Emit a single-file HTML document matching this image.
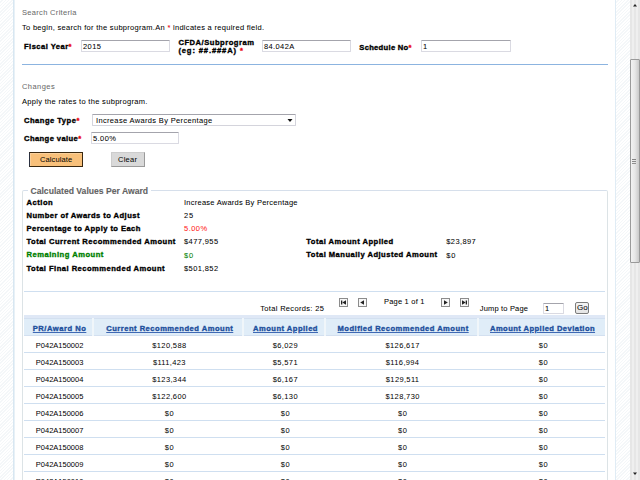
<!DOCTYPE html>
<html><head><meta charset="utf-8"><style>
html,body{margin:0;padding:0;width:640px;height:480px;overflow:hidden;background:#fff;position:relative}
.t{position:absolute;white-space:nowrap;font-family:"Liberation Sans", sans-serif;color:#000}
.r{position:absolute}
</style></head><body>
<div class="r" style="left:0px;top:0px;width:13px;height:480px;background:repeating-linear-gradient(135deg,#ffffff 0px,#ffffff 1.3px,#f4f7f9 1.3px,#f4f7f9 2.3px)"></div>
<div class="r" style="left:13px;top:0px;width:1px;height:480px;background:#d8e7f2"></div>
<div class="r" style="left:14px;top:0px;width:1px;height:480px;background:#e8f1f7"></div>
<div class="r" style="left:615px;top:0px;width:1px;height:480px;background:#e0ecf5"></div>
<div class="r" style="left:616px;top:0px;width:14px;height:480px;background:repeating-linear-gradient(135deg,#ffffff 0px,#ffffff 1.3px,#f4f7f9 1.3px,#f4f7f9 2.3px)"></div>
<div class="r" style="left:630px;top:0px;width:10px;height:480px;background:repeating-linear-gradient(90deg,#e6e6e6 0px,#e6e6e6 2px,#efefef 2px,#efefef 4px)"></div>
<svg class="r" style="left:630px;top:0px" width="10" height="12"><path d="M3 6.5 L5 4 L7 6.5 Z" fill="#222"/></svg>
<svg class="r" style="left:630px;top:468px" width="10" height="12"><path d="M3 4.5 L5 7 L7 4.5 Z" fill="#222"/></svg>
<div class="r" style="left:630px;top:59px;width:10px;height:204px;box-sizing:border-box;border:1px solid #9a9a9a;border-radius:1px;background:linear-gradient(90deg,#f2f2f2,#e6e6e6 50%,#c9c9c9)"></div>
<div class="r" style="left:632px;top:159px;width:4px;height:1px;background:#858585"></div>
<div class="r" style="left:632px;top:161px;width:4px;height:1px;background:#8a8a8a"></div>
<div class="r" style="left:632px;top:163px;width:4px;height:1px;background:#909090"></div>
<div class="t" style="left:22px;top:9.05px;font-size:7.5px;line-height:7.5px;font-weight:normal;color:#6b6b6b;letter-spacing:0.319px;-webkit-text-stroke:0.04px currentColor;">Search Criteria</div>
<div class="t" style="left:22px;top:24.05px;font-size:7.5px;line-height:7.5px;font-weight:normal;color:#000;letter-spacing:0.296px;-webkit-text-stroke:0.04px currentColor;">To begin, search for the subprogram.An <span style="color:#e8000b">*</span> indicates a required field.</div>
<div class="t" style="left:24px;top:42.97px;font-size:7.6px;line-height:7.6px;font-weight:bold;color:#000;letter-spacing:0.458px;-webkit-text-stroke:0.35px currentColor;">Fiscal Year<span style="color:#e8000b">*</span></div>
<div class="r" style="left:81px;top:40px;width:89px;height:12px;box-sizing:border-box;border:1px solid #dadae2;border-top-color:#a4a4ac;border-radius:1px;background:#fff"></div>
<div class="t" style="left:83px;top:43.05px;font-size:7.5px;line-height:7.5px;font-weight:normal;color:#000;letter-spacing:0.445px;-webkit-text-stroke:0.04px currentColor;">2015</div>
<div class="t" style="left:178.4px;top:38.97px;font-size:7.6px;line-height:7.6px;font-weight:bold;color:#000;letter-spacing:0.514px;-webkit-text-stroke:0.35px currentColor;">CFDA/Subprogram</div>
<div class="t" style="left:178.4px;top:46.97px;font-size:7.6px;line-height:7.6px;font-weight:bold;color:#000;letter-spacing:0.866px;-webkit-text-stroke:0.35px currentColor;">(eg: ##.###A) <span style="color:#e8000b">*</span></div>
<div class="r" style="left:262px;top:40px;width:89px;height:12px;box-sizing:border-box;border:1px solid #dadae2;border-top-color:#a4a4ac;border-radius:1px;background:#fff"></div>
<div class="t" style="left:264px;top:43.05px;font-size:7.5px;line-height:7.5px;font-weight:normal;color:#000;letter-spacing:0.373px;-webkit-text-stroke:0.04px currentColor;">84.042A</div>
<div class="t" style="left:359.3px;top:43.97px;font-size:7.6px;line-height:7.6px;font-weight:bold;color:#000;letter-spacing:0.293px;-webkit-text-stroke:0.35px currentColor;">Schedule No<span style="color:#e8000b">*</span></div>
<div class="r" style="left:421px;top:40px;width:90px;height:12px;box-sizing:border-box;border:1px solid #dadae2;border-top-color:#a4a4ac;border-radius:1px;background:#fff"></div>
<div class="t" style="left:423px;top:43.05px;font-size:7.5px;line-height:7.5px;font-weight:normal;color:#000;-webkit-text-stroke:0.04px currentColor;">1</div>
<div class="r" style="left:22px;top:64px;width:586px;height:1px;background:#8cb4e0"></div>
<div class="t" style="left:22px;top:83.45px;font-size:7.5px;line-height:7.5px;font-weight:normal;color:#6b6b6b;letter-spacing:0.447px;-webkit-text-stroke:0.04px currentColor;">Changes</div>
<div class="t" style="left:22px;top:98.45px;font-size:7.5px;line-height:7.5px;font-weight:normal;color:#000;letter-spacing:0.311px;-webkit-text-stroke:0.04px currentColor;">Apply the rates to the subprogram.</div>
<div class="t" style="left:24px;top:117.37px;font-size:7.6px;line-height:7.6px;font-weight:bold;color:#000;letter-spacing:0.480px;-webkit-text-stroke:0.35px currentColor;">Change Type<span style="color:#e8000b">*</span></div>
<div class="r" style="left:92px;top:114px;width:204px;height:12px;box-sizing:border-box;border:1px solid #d4d4dc;border-top-color:#a4a4ac;border-radius:1px;background:#fff"></div>
<div class="t" style="left:96px;top:117.05px;font-size:7.5px;line-height:7.5px;font-weight:normal;color:#000;letter-spacing:0.340px;-webkit-text-stroke:0.04px currentColor;">Increase Awards By Percentage</div>
<svg class="r" style="left:286px;top:117px" width="8" height="6"><path d="M1.5 2 L6.5 2 L4 5 Z" fill="#111"/></svg>
<div class="t" style="left:24px;top:135.22px;font-size:7.6px;line-height:7.6px;font-weight:bold;color:#000;letter-spacing:0.402px;-webkit-text-stroke:0.35px currentColor;">Change value<span style="color:#e8000b">*</span></div>
<div class="r" style="left:91px;top:132px;width:88px;height:12px;box-sizing:border-box;border:1px solid #dadae2;border-top-color:#a4a4ac;border-radius:1px;background:#fff"></div>
<div class="t" style="left:93px;top:135.05px;font-size:7.5px;line-height:7.5px;font-weight:normal;color:#000;letter-spacing:0.425px;-webkit-text-stroke:0.04px currentColor;">5.00%</div>
<div class="r" style="left:29px;top:152px;width:54px;height:15px;box-sizing:border-box;border:1px solid #3a2810;border-left-color:#2a3040;background:#f8c07a;box-shadow:inset 1px 1px 0 #fbd09a"></div>
<div class="t" style="left:40px;top:155.55px;font-size:7.5px;line-height:7.5px;font-weight:normal;color:#000;letter-spacing:0.104px;">Calculate</div>
<div class="r" style="left:111px;top:152px;width:34px;height:15px;box-sizing:border-box;border:1px solid #cccccc;border-right-color:#9a9a9a;border-bottom-color:#9a9a9a;background:#d9d9d9"></div>
<div class="t" style="left:118px;top:155.55px;font-size:7.5px;line-height:7.5px;font-weight:normal;color:#000;letter-spacing:0.239px;">Clear</div>
<div class="r" style="left:22px;top:190px;width:586px;height:310px;box-sizing:border-box;border:1px solid #dce3e6;border-top-color:#d6dfeb;border-radius:2px"></div>
<div class="r" style="left:28px;top:186px;width:123px;height:9px;background:#fff"></div>
<div class="t" style="left:30.5px;top:187.12px;font-size:8.6px;line-height:8.6px;font-weight:bold;color:#636363;-webkit-text-stroke:0.1px currentColor;">Calculated Values Per Award</div>
<div class="t" style="left:26.5px;top:198.97px;font-size:7.6px;line-height:7.6px;font-weight:bold;color:#000;letter-spacing:0.516px;-webkit-text-stroke:0.35px currentColor;">Action</div>
<div class="t" style="left:184px;top:199.05px;font-size:7.5px;line-height:7.5px;font-weight:normal;color:#000;letter-spacing:0.247px;-webkit-text-stroke:0.04px currentColor;">Increase Awards By Percentage</div>
<div class="t" style="left:26.5px;top:211.97px;font-size:7.6px;line-height:7.6px;font-weight:bold;color:#000;letter-spacing:0.445px;-webkit-text-stroke:0.35px currentColor;">Number of Awards to Adjust</div>
<div class="t" style="left:184px;top:212.05px;font-size:7.5px;line-height:7.5px;font-weight:normal;color:#000;letter-spacing:0.745px;-webkit-text-stroke:0.04px currentColor;">25</div>
<div class="t" style="left:26.5px;top:224.97px;font-size:7.6px;line-height:7.6px;font-weight:bold;color:#000;letter-spacing:0.432px;-webkit-text-stroke:0.35px currentColor;">Percentage to Apply to Each</div>
<div class="t" style="left:184px;top:225.05px;font-size:7.5px;line-height:7.5px;font-weight:normal;color:#ff1a1a;letter-spacing:0.475px;-webkit-text-stroke:0.04px currentColor;">5.00%</div>
<div class="t" style="left:26.5px;top:238.37px;font-size:7.6px;line-height:7.6px;font-weight:bold;color:#000;letter-spacing:0.473px;-webkit-text-stroke:0.35px currentColor;">Total Current Recommended Amount</div>
<div class="t" style="left:184px;top:238.45px;font-size:7.5px;line-height:7.5px;font-weight:normal;color:#000;letter-spacing:0.399px;-webkit-text-stroke:0.04px currentColor;">$477,955</div>
<div class="t" style="left:26.5px;top:251.47px;font-size:7.6px;line-height:7.6px;font-weight:bold;color:#008000;letter-spacing:0.505px;-webkit-text-stroke:0.35px currentColor;">Remaining Amount</div>
<div class="t" style="left:184px;top:251.55px;font-size:7.5px;line-height:7.5px;font-weight:normal;color:#008000;letter-spacing:0.745px;-webkit-text-stroke:0.04px currentColor;">$0</div>
<div class="t" style="left:26.5px;top:264.57px;font-size:7.6px;line-height:7.6px;font-weight:bold;color:#000;letter-spacing:0.469px;-webkit-text-stroke:0.35px currentColor;">Total Final Recommended Amount</div>
<div class="t" style="left:184px;top:264.65px;font-size:7.5px;line-height:7.5px;font-weight:normal;color:#000;letter-spacing:0.399px;-webkit-text-stroke:0.04px currentColor;">$501,852</div>
<div class="t" style="left:306.25px;top:238.37px;font-size:7.6px;line-height:7.6px;font-weight:bold;color:#000;letter-spacing:0.485px;-webkit-text-stroke:0.35px currentColor;">Total Amount Applied</div>
<div class="t" style="left:306.25px;top:251.47px;font-size:7.6px;line-height:7.6px;font-weight:bold;color:#000;letter-spacing:0.478px;-webkit-text-stroke:0.35px currentColor;">Total Manually Adjusted Amount</div>
<div class="t" style="left:446.25px;top:238.45px;font-size:7.5px;line-height:7.5px;font-weight:normal;color:#000;letter-spacing:0.404px;-webkit-text-stroke:0.04px currentColor;">$23,897</div>
<div class="t" style="left:446.25px;top:251.55px;font-size:7.5px;line-height:7.5px;font-weight:normal;color:#000;letter-spacing:0.745px;-webkit-text-stroke:0.04px currentColor;">$0</div>
<div class="r" style="left:24px;top:291px;width:581px;height:1px;background:#cfdff0"></div>
<div class="t" style="left:260.25px;top:305.05px;font-size:7.5px;line-height:7.5px;font-weight:normal;color:#000;letter-spacing:0.326px;-webkit-text-stroke:0.04px currentColor;">Total Records: 25</div>
<div class="t" style="left:384px;top:298.05px;font-size:7.5px;line-height:7.5px;font-weight:normal;color:#000;letter-spacing:0.205px;-webkit-text-stroke:0.04px currentColor;">Page 1 of 1</div>
<div class="t" style="left:479.8px;top:305.25px;font-size:7.5px;line-height:7.5px;font-weight:normal;color:#000;letter-spacing:0.168px;-webkit-text-stroke:0.04px currentColor;">Jump to Page</div>
<svg class="r" style="left:339px;top:298px" width="9" height="9"><rect x="0.5" y="0.5" width="8" height="8" fill="#f7f7f7" stroke="#8c8c8c"/><rect x="2" y="2.5" width="1.3" height="4" fill="#222"/><path d="M3.3 4.5 L7 2.3 L7 6.7 Z" fill="#222"/></svg>
<svg class="r" style="left:358px;top:298px" width="9" height="9"><rect x="0.5" y="0.5" width="8" height="8" fill="#f7f7f7" stroke="#8c8c8c"/><path d="M2.2 4.5 L6 2.2 L6 6.8 Z" fill="#222"/></svg>
<svg class="r" style="left:441px;top:298px" width="9" height="9"><rect x="0.5" y="0.5" width="8" height="8" fill="#f7f7f7" stroke="#8c8c8c"/><path d="M6.8 4.5 L3 2.2 L3 6.8 Z" fill="#222"/></svg>
<svg class="r" style="left:460px;top:298px" width="9" height="9"><rect x="0.5" y="0.5" width="8" height="8" fill="#f7f7f7" stroke="#8c8c8c"/><rect x="5.7" y="2.5" width="1.3" height="4" fill="#222"/><path d="M5.7 4.5 L2 2.3 L2 6.7 Z" fill="#222"/></svg>
<div class="r" style="left:543px;top:303px;width:21px;height:11px;box-sizing:border-box;border:1px solid #dadae2;border-top-color:#a4a4ac;border-radius:1px;background:#fff"></div>
<div class="t" style="left:545px;top:305.05px;font-size:7.5px;line-height:7.5px;font-weight:normal;color:#000;-webkit-text-stroke:0.04px currentColor;">1</div>
<div class="r" style="left:575px;top:302px;width:14px;height:12px;box-sizing:border-box;border:1px solid #7c7c7c;border-radius:2px;background:linear-gradient(#f4f4f4,#e4e4e4)"></div>
<div class="t" style="left:577px;top:304.23px;font-size:8.0px;line-height:8.0px;font-weight:normal;color:#000;-webkit-text-stroke:0.04px currentColor;">Go</div>
<div class="r" style="left:24px;top:315px;width:581px;height:3px;background:#dfe8f6"></div>
<div class="r" style="left:24px;top:318px;width:581px;height:18px;background:#f0f6fa"></div>
<div class="r" style="left:24px;top:318px;width:68px;height:18px;background:#e0edf8;border-top:1px solid #d3e0f0;border-bottom:1px solid #d3e0f0;box-sizing:border-box"></div>
<div class="r" style="left:94px;top:318px;width:148px;height:18px;background:#e0edf8;border-top:1px solid #d3e0f0;border-bottom:1px solid #d3e0f0;box-sizing:border-box"></div>
<div class="r" style="left:244px;top:318px;width:80px;height:18px;background:#e0edf8;border-top:1px solid #d3e0f0;border-bottom:1px solid #d3e0f0;box-sizing:border-box"></div>
<div class="r" style="left:325.5px;top:318px;width:151.5px;height:18px;background:#e0edf8;border-top:1px solid #d3e0f0;border-bottom:1px solid #d3e0f0;box-sizing:border-box"></div>
<div class="r" style="left:479px;top:318px;width:126px;height:18px;background:#e0edf8;border-top:1px solid #d3e0f0;border-bottom:1px solid #d3e0f0;box-sizing:border-box"></div>
<div class="t" style="left:32.8px;top:324.97px;font-size:7.6px;line-height:7.6px;font-weight:bold;color:#1d4f9c;letter-spacing:0.505px;-webkit-text-stroke:0.35px currentColor;text-decoration:underline;text-decoration-thickness:1px;text-decoration-color:#3f69b4;">PR/Award No</div>
<div class="t" style="left:106.25px;top:324.97px;font-size:7.6px;line-height:7.6px;font-weight:bold;color:#1d4f9c;letter-spacing:0.482px;-webkit-text-stroke:0.35px currentColor;text-decoration:underline;text-decoration-thickness:1px;text-decoration-color:#3f69b4;">Current Recommended Amount</div>
<div class="t" style="left:253px;top:324.97px;font-size:7.6px;line-height:7.6px;font-weight:bold;color:#1d4f9c;letter-spacing:0.473px;-webkit-text-stroke:0.35px currentColor;text-decoration:underline;text-decoration-thickness:1px;text-decoration-color:#3f69b4;">Amount Applied</div>
<div class="t" style="left:337.5px;top:324.97px;font-size:7.6px;line-height:7.6px;font-weight:bold;color:#1d4f9c;letter-spacing:0.479px;-webkit-text-stroke:0.35px currentColor;text-decoration:underline;text-decoration-thickness:1px;text-decoration-color:#3f69b4;">Modified Recommended Amount</div>
<div class="t" style="left:490px;top:324.97px;font-size:7.6px;line-height:7.6px;font-weight:bold;color:#1d4f9c;letter-spacing:0.433px;-webkit-text-stroke:0.35px currentColor;text-decoration:underline;text-decoration-thickness:1px;text-decoration-color:#3f69b4;">Amount Applied Deviation</div>
<div class="t" style="left:35.8px;top:342.05px;font-size:7.5px;line-height:7.5px;font-weight:normal;color:#000;">P042A150002</div>
<div class="t" style="left:95.38px;width:148.0px;text-align:center;top:342.05px;font-size:7.5px;line-height:7.5px;font-weight:normal;color:#000;letter-spacing:0.358px;">$120,588</div>
<div class="t" style="left:245.38px;width:80.0px;text-align:center;top:342.05px;font-size:7.5px;line-height:7.5px;font-weight:normal;color:#000;letter-spacing:0.367px;">$6,029</div>
<div class="t" style="left:326.88px;width:151.5px;text-align:center;top:342.05px;font-size:7.5px;line-height:7.5px;font-weight:normal;color:#000;letter-spacing:0.358px;">$126,617</div>
<div class="t" style="left:480.53px;width:126.00000000000006px;text-align:center;top:342.05px;font-size:7.5px;line-height:7.5px;font-weight:normal;color:#000;letter-spacing:0.667px;">$0</div>
<div class="r" style="left:24px;top:352px;width:581px;height:1px;background:#cfdff0"></div>
<div class="t" style="left:35.8px;top:359.05px;font-size:7.5px;line-height:7.5px;font-weight:normal;color:#000;">P042A150003</div>
<div class="t" style="left:95.37px;width:148.0px;text-align:center;top:359.05px;font-size:7.5px;line-height:7.5px;font-weight:normal;color:#000;letter-spacing:0.345px;">$111,423</div>
<div class="t" style="left:245.38px;width:80.0px;text-align:center;top:359.05px;font-size:7.5px;line-height:7.5px;font-weight:normal;color:#000;letter-spacing:0.367px;">$5,571</div>
<div class="t" style="left:326.88px;width:151.5px;text-align:center;top:359.05px;font-size:7.5px;line-height:7.5px;font-weight:normal;color:#000;letter-spacing:0.351px;">$116,994</div>
<div class="t" style="left:480.53px;width:126.00000000000006px;text-align:center;top:359.05px;font-size:7.5px;line-height:7.5px;font-weight:normal;color:#000;letter-spacing:0.667px;">$0</div>
<div class="r" style="left:24px;top:369px;width:581px;height:1px;background:#cfdff0"></div>
<div class="t" style="left:35.8px;top:376.05px;font-size:7.5px;line-height:7.5px;font-weight:normal;color:#000;">P042A150004</div>
<div class="t" style="left:95.38px;width:148.0px;text-align:center;top:376.05px;font-size:7.5px;line-height:7.5px;font-weight:normal;color:#000;letter-spacing:0.358px;">$123,344</div>
<div class="t" style="left:245.38px;width:80.0px;text-align:center;top:376.05px;font-size:7.5px;line-height:7.5px;font-weight:normal;color:#000;letter-spacing:0.367px;">$6,167</div>
<div class="t" style="left:326.88px;width:151.5px;text-align:center;top:376.05px;font-size:7.5px;line-height:7.5px;font-weight:normal;color:#000;letter-spacing:0.351px;">$129,511</div>
<div class="t" style="left:480.53px;width:126.00000000000006px;text-align:center;top:376.05px;font-size:7.5px;line-height:7.5px;font-weight:normal;color:#000;letter-spacing:0.667px;">$0</div>
<div class="r" style="left:24px;top:386px;width:581px;height:1px;background:#cfdff0"></div>
<div class="t" style="left:35.8px;top:393.05px;font-size:7.5px;line-height:7.5px;font-weight:normal;color:#000;">P042A150005</div>
<div class="t" style="left:95.38px;width:148.0px;text-align:center;top:393.05px;font-size:7.5px;line-height:7.5px;font-weight:normal;color:#000;letter-spacing:0.358px;">$122,600</div>
<div class="t" style="left:245.38px;width:80.0px;text-align:center;top:393.05px;font-size:7.5px;line-height:7.5px;font-weight:normal;color:#000;letter-spacing:0.367px;">$6,130</div>
<div class="t" style="left:326.88px;width:151.5px;text-align:center;top:393.05px;font-size:7.5px;line-height:7.5px;font-weight:normal;color:#000;letter-spacing:0.358px;">$128,730</div>
<div class="t" style="left:480.53px;width:126.00000000000006px;text-align:center;top:393.05px;font-size:7.5px;line-height:7.5px;font-weight:normal;color:#000;letter-spacing:0.667px;">$0</div>
<div class="r" style="left:24px;top:403px;width:581px;height:1px;background:#cfdff0"></div>
<div class="t" style="left:35.8px;top:410.05px;font-size:7.5px;line-height:7.5px;font-weight:normal;color:#000;">P042A150006</div>
<div class="t" style="left:95.53px;width:148.0px;text-align:center;top:410.05px;font-size:7.5px;line-height:7.5px;font-weight:normal;color:#000;letter-spacing:0.667px;">$0</div>
<div class="t" style="left:245.53px;width:80.0px;text-align:center;top:410.05px;font-size:7.5px;line-height:7.5px;font-weight:normal;color:#000;letter-spacing:0.667px;">$0</div>
<div class="t" style="left:327.03px;width:151.5px;text-align:center;top:410.05px;font-size:7.5px;line-height:7.5px;font-weight:normal;color:#000;letter-spacing:0.667px;">$0</div>
<div class="t" style="left:480.53px;width:126.00000000000006px;text-align:center;top:410.05px;font-size:7.5px;line-height:7.5px;font-weight:normal;color:#000;letter-spacing:0.667px;">$0</div>
<div class="r" style="left:24px;top:420px;width:581px;height:1px;background:#cfdff0"></div>
<div class="t" style="left:35.8px;top:427.05px;font-size:7.5px;line-height:7.5px;font-weight:normal;color:#000;">P042A150007</div>
<div class="t" style="left:95.53px;width:148.0px;text-align:center;top:427.05px;font-size:7.5px;line-height:7.5px;font-weight:normal;color:#000;letter-spacing:0.667px;">$0</div>
<div class="t" style="left:245.53px;width:80.0px;text-align:center;top:427.05px;font-size:7.5px;line-height:7.5px;font-weight:normal;color:#000;letter-spacing:0.667px;">$0</div>
<div class="t" style="left:327.03px;width:151.5px;text-align:center;top:427.05px;font-size:7.5px;line-height:7.5px;font-weight:normal;color:#000;letter-spacing:0.667px;">$0</div>
<div class="t" style="left:480.53px;width:126.00000000000006px;text-align:center;top:427.05px;font-size:7.5px;line-height:7.5px;font-weight:normal;color:#000;letter-spacing:0.667px;">$0</div>
<div class="r" style="left:24px;top:437px;width:581px;height:1px;background:#cfdff0"></div>
<div class="t" style="left:35.8px;top:444.05px;font-size:7.5px;line-height:7.5px;font-weight:normal;color:#000;">P042A150008</div>
<div class="t" style="left:95.53px;width:148.0px;text-align:center;top:444.05px;font-size:7.5px;line-height:7.5px;font-weight:normal;color:#000;letter-spacing:0.667px;">$0</div>
<div class="t" style="left:245.53px;width:80.0px;text-align:center;top:444.05px;font-size:7.5px;line-height:7.5px;font-weight:normal;color:#000;letter-spacing:0.667px;">$0</div>
<div class="t" style="left:327.03px;width:151.5px;text-align:center;top:444.05px;font-size:7.5px;line-height:7.5px;font-weight:normal;color:#000;letter-spacing:0.667px;">$0</div>
<div class="t" style="left:480.53px;width:126.00000000000006px;text-align:center;top:444.05px;font-size:7.5px;line-height:7.5px;font-weight:normal;color:#000;letter-spacing:0.667px;">$0</div>
<div class="r" style="left:24px;top:454px;width:581px;height:1px;background:#cfdff0"></div>
<div class="t" style="left:35.8px;top:461.05px;font-size:7.5px;line-height:7.5px;font-weight:normal;color:#000;">P042A150009</div>
<div class="t" style="left:95.53px;width:148.0px;text-align:center;top:461.05px;font-size:7.5px;line-height:7.5px;font-weight:normal;color:#000;letter-spacing:0.667px;">$0</div>
<div class="t" style="left:245.53px;width:80.0px;text-align:center;top:461.05px;font-size:7.5px;line-height:7.5px;font-weight:normal;color:#000;letter-spacing:0.667px;">$0</div>
<div class="t" style="left:327.03px;width:151.5px;text-align:center;top:461.05px;font-size:7.5px;line-height:7.5px;font-weight:normal;color:#000;letter-spacing:0.667px;">$0</div>
<div class="t" style="left:480.53px;width:126.00000000000006px;text-align:center;top:461.05px;font-size:7.5px;line-height:7.5px;font-weight:normal;color:#000;letter-spacing:0.667px;">$0</div>
<div class="r" style="left:24px;top:471px;width:581px;height:1px;background:#cfdff0"></div>
<div class="t" style="left:35.8px;top:478.05px;font-size:7.5px;line-height:7.5px;font-weight:normal;color:#000;">P042A150010</div>
<div class="t" style="left:95.53px;width:148.0px;text-align:center;top:478.05px;font-size:7.5px;line-height:7.5px;font-weight:normal;color:#000;letter-spacing:0.667px;">$0</div>
<div class="t" style="left:245.53px;width:80.0px;text-align:center;top:478.05px;font-size:7.5px;line-height:7.5px;font-weight:normal;color:#000;letter-spacing:0.667px;">$0</div>
<div class="t" style="left:327.03px;width:151.5px;text-align:center;top:478.05px;font-size:7.5px;line-height:7.5px;font-weight:normal;color:#000;letter-spacing:0.667px;">$0</div>
<div class="t" style="left:480.53px;width:126.00000000000006px;text-align:center;top:478.05px;font-size:7.5px;line-height:7.5px;font-weight:normal;color:#000;letter-spacing:0.667px;">$0</div>
<div class="r" style="left:24px;top:488px;width:581px;height:1px;background:#cfdff0"></div>
</body></html>
